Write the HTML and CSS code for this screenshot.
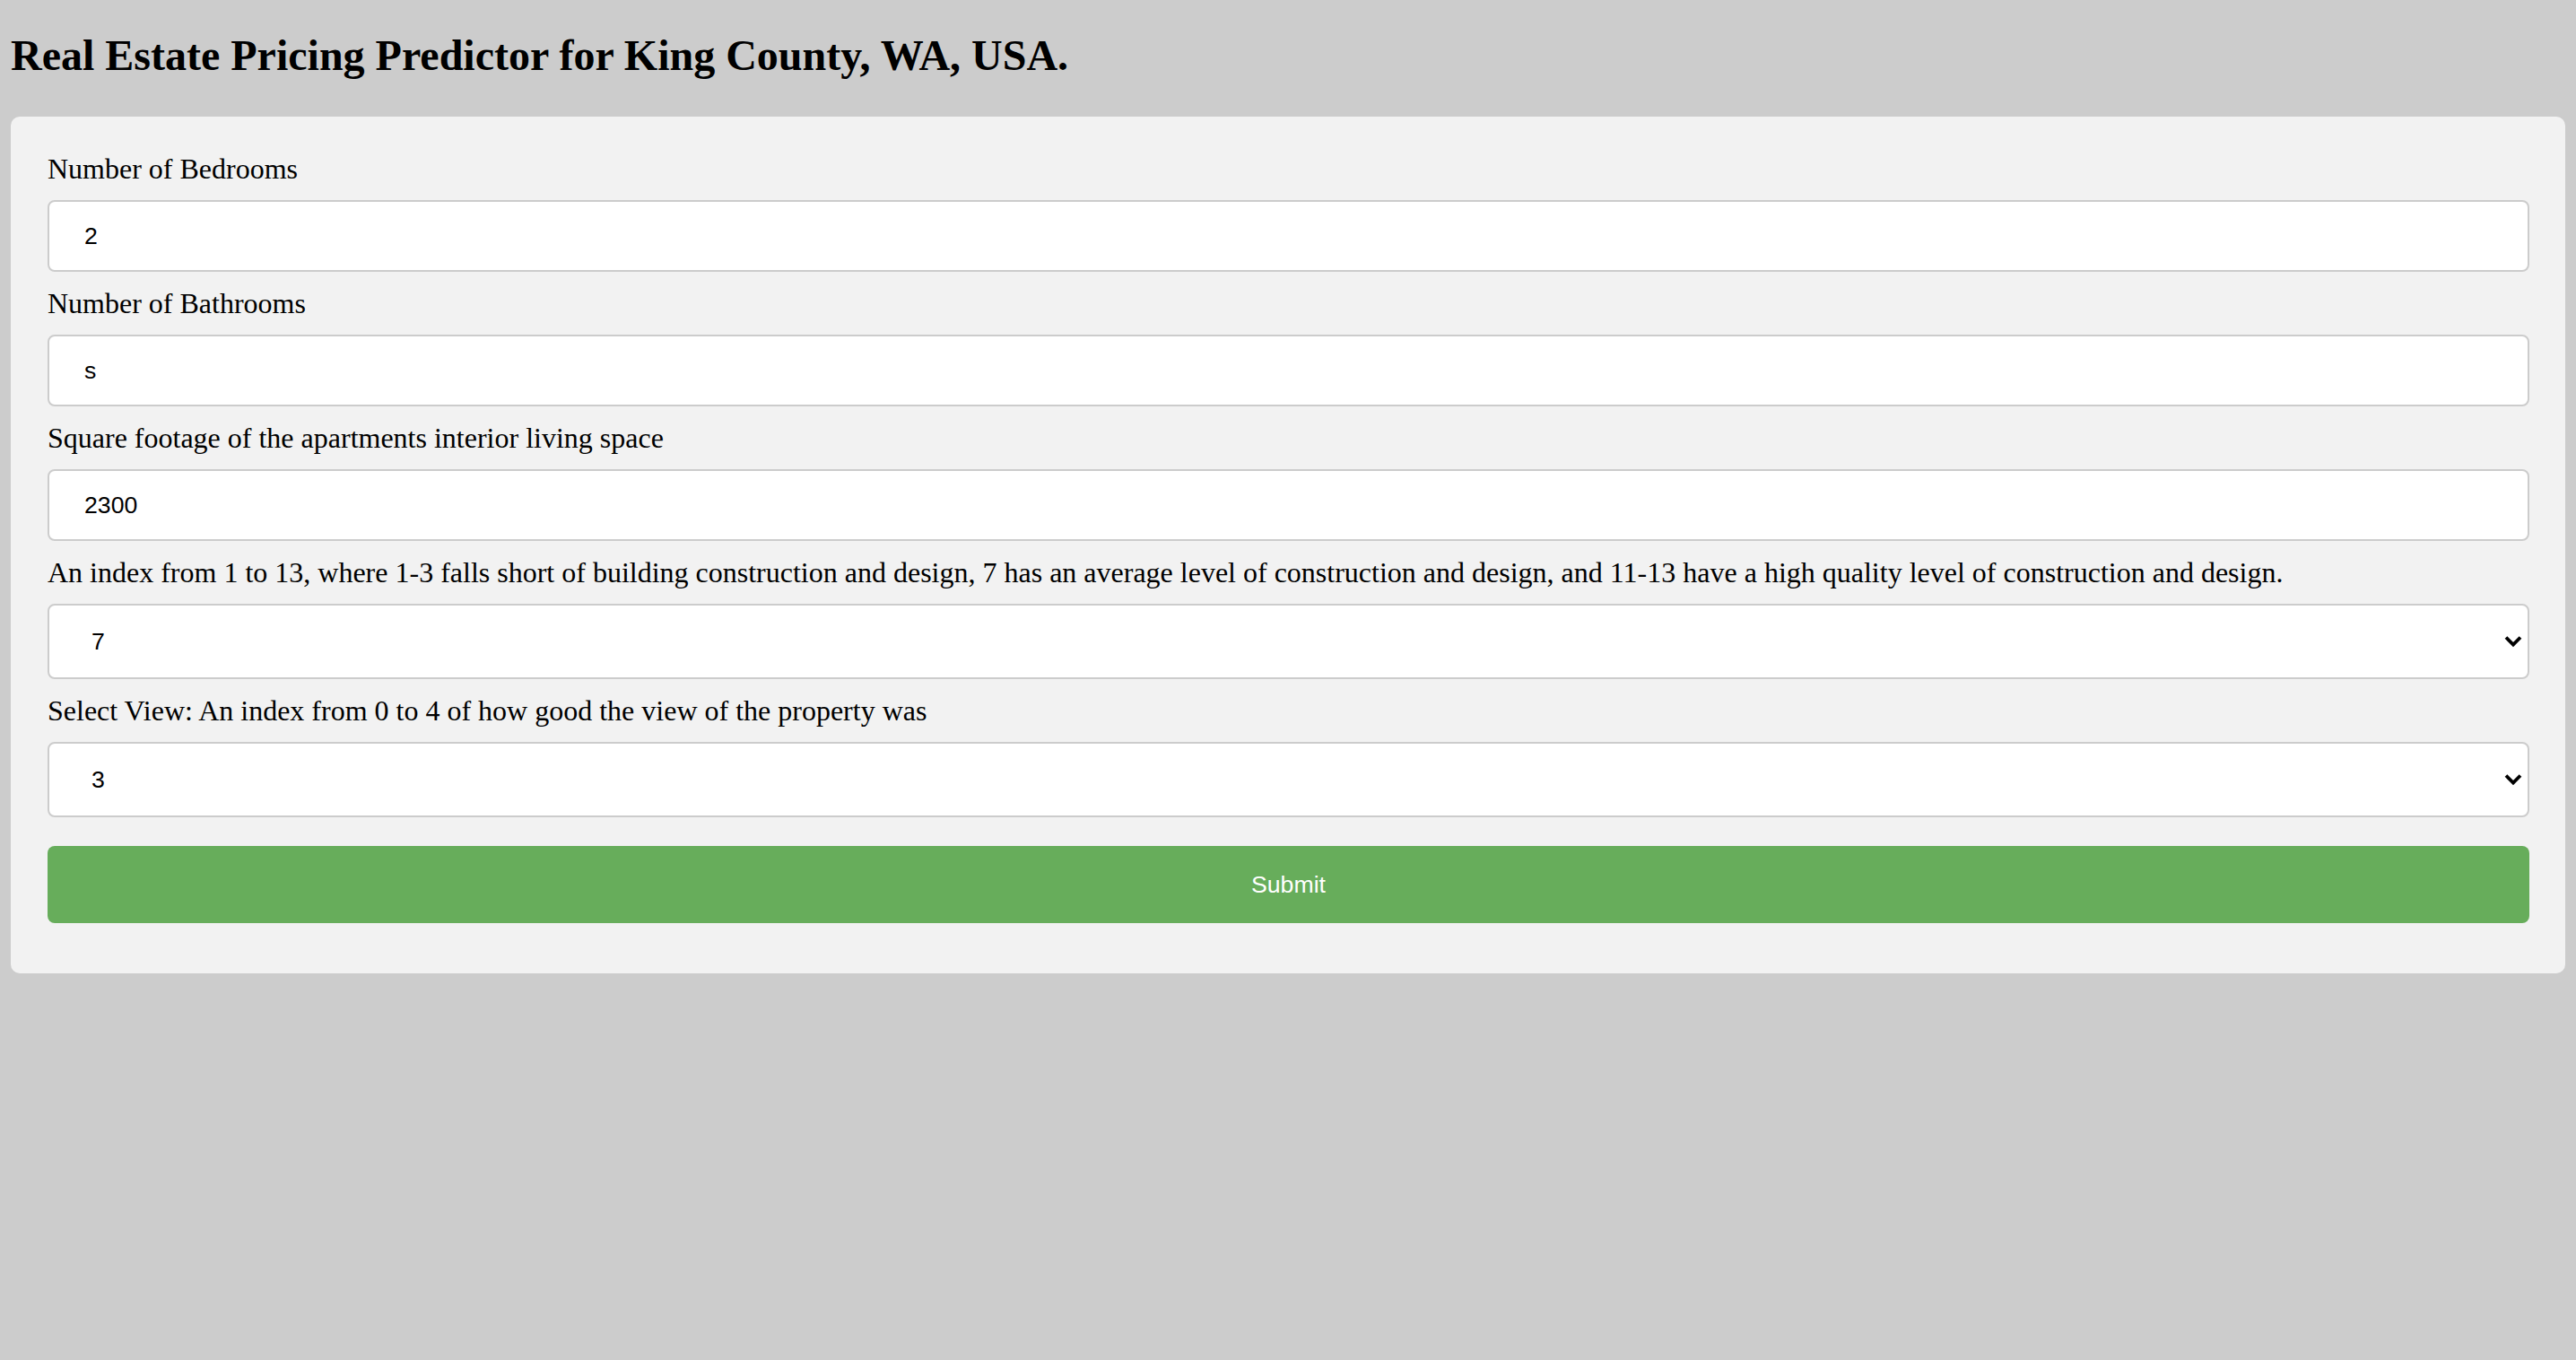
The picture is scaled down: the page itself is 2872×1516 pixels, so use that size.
FILE: index.html
```html
<!DOCTYPE html>
<html lang="en">
<head>
<meta charset="utf-8">
<title>Real Estate Pricing Predictor</title>
<link rel="stylesheet" href="styles.css">
</head>
<body>
<h2 class="title">Real Estate Pricing Predictor for King County, WA, USA.</h2>
<form class="card">
  <label class="label" for="bedrooms">Number of Bedrooms</label>
  <input class="field" id="bedrooms" type="text" value="2">
  <label class="label" for="bathrooms">Number of Bathrooms</label>
  <input class="field" id="bathrooms" type="text" value="s">
  <label class="label" for="sqft">Square footage of the apartments interior living space</label>
  <input class="field" id="sqft" type="text" value="2300">
  <label class="label" for="grade">An index from 1 to 13, where 1-3 falls short of building construction and design, 7 has an average level of construction and design, and 11-13 have a high quality level of construction and design.</label>
  <div class="select-wrap">
    <select class="select" id="grade">
      <option>1</option><option>2</option><option>3</option><option>4</option><option>5</option><option>6</option>
      <option selected>7</option><option>8</option><option>9</option><option>10</option><option>11</option><option>12</option><option>13</option>
    </select>
    <svg class="chevron" width="20" height="14" viewBox="0 0 20 14"><polyline points="2,2.5 10,10.5 18,2.5" fill="none" stroke="#000" stroke-width="3.8"/></svg>
  </div>
  <label class="label" for="view">Select View: An index from 0 to 4 of how good the view of the property was</label>
  <div class="select-wrap">
    <select class="select" id="view">
      <option>0</option><option>1</option><option>2</option><option selected>3</option><option>4</option>
    </select>
    <svg class="chevron" width="20" height="14" viewBox="0 0 20 14"><polyline points="2,2.5 10,10.5 18,2.5" fill="none" stroke="#000" stroke-width="3.8"/></svg>
  </div>
  <button class="submit" type="button">Submit</button>
</form>
</body>
</html>
```

FILE: styles.css
```css
html, body {
  background: #cccccc;
}
body {
  margin: 12px;
  font-family: "Liberation Serif", "Times New Roman", serif;
  color: #000;
}
.title {
  font-size: 48px;
  font-weight: bold;
  line-height: 55px;
  margin: 22px 0 41px;
}
.card {
  display: flex;
  flex-direction: column;
  background: #f2f2f2;
  border-radius: 10px;
  padding: 39px 40px 56px 41px;
}
.label {
  display: block;
  font-size: 32px;
  line-height: 38px;
}
.field {
  box-sizing: border-box;
  height: 80px;
  margin: 16px 0;
  padding: 0 39px;
  border: 2px solid #cccccc;
  border-radius: 8px;
  background: #fff;
  font-family: "Liberation Sans", Arial, sans-serif;
  font-size: 26.67px;
  color: #000;
  outline: none;
}
.select-wrap {
  position: relative;
  margin: 16px 0;
}
.select {
  box-sizing: border-box;
  display: block;
  width: 100%;
  height: 84px;
  padding: 0 40px 0 47px;
  border: 2px solid #cccccc;
  border-radius: 8px;
  background: #fff;
  font-family: "Liberation Sans", Arial, sans-serif;
  font-size: 26.67px;
  color: #000;
  appearance: none;
  -webkit-appearance: none;
  outline: none;
}
.chevron {
  position: absolute;
  right: 8px;
  top: 35px;
  pointer-events: none;
}
.submit {
  height: 86px;
  margin-top: 16px;
  border: none;
  border-radius: 8px;
  background: #67ad5b;
  color: #fff;
  font-family: "Liberation Sans", Arial, sans-serif;
  font-size: 26.67px;
  cursor: pointer;
}
```
